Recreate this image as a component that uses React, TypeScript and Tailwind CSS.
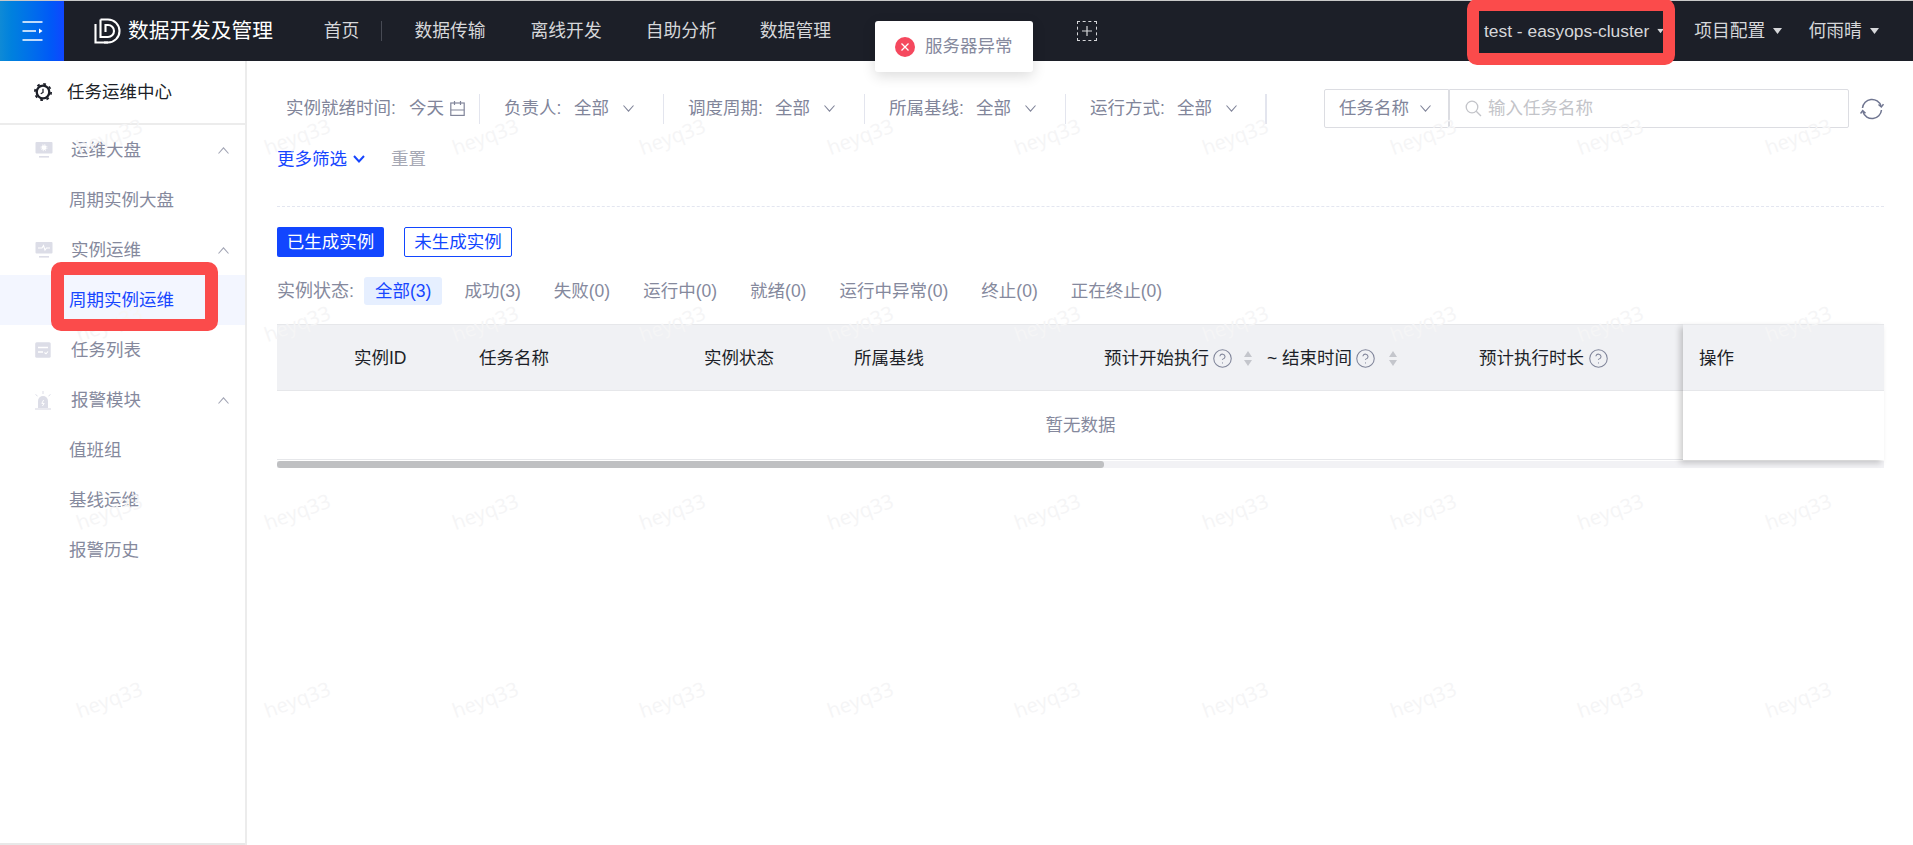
import React from "react";
import { CircleHelp } from "lucide-react";

function Chev({ className = "", up = false, w = 11 }: { className?: string; up?: boolean; w?: number }) {
  return (
    <svg width={w} height="7" viewBox="0 0 11 7" fill="none" className={className}>
      <polyline points={up ? "0.5,6.5 5.5,0.8 10.5,6.5" : "0.5,0.5 5.5,6.2 10.5,0.5"} stroke="currentColor" strokeWidth="1.1" />
    </svg>
  );
}

function Caret({ className = "" }: { className?: string }) {
  return (
    <svg width="9" height="6" viewBox="0 0 9 6" className={className}>
      <polygon points="0,0 9,0 4.5,6" fill="currentColor" />
    </svg>
  );
}

function Sort() {
  return (
    <svg width="8" height="15" viewBox="0 0 8 15" className="shrink-0">
      <polygon points="4,0 8,6 0,6" fill="#c4c6cc" />
      <polygon points="0,9 8,9 4,15" fill="#c4c6cc" />
    </svg>
  );
}

function Help() {
  return <CircleHelp size={21} strokeWidth={1.2} className="shrink-0 text-[#7f8499]" />;
}

function Filter({ w, label, value, labelW, heavy }: { w: string; label: string; value: string; labelW: string; heavy?: boolean }) {
  return (
    <div className={`${w} flex h-[30px] shrink-0 items-center ${heavy ? "border-r-2" : "border-r"} border-[#e3e5ee] pl-[24px] text-[#81859a]`}>
      <span className={`${labelW} shrink-0 whitespace-nowrap`}>{label}</span>
      <span className="whitespace-nowrap">{value}</span>
      <Chev className="ml-[14px] text-[#81859a]" />
    </div>
  );
}

const Nav = ({ children, className = "" }: { children: React.ReactNode; className?: string }) => (
  <span className={`whitespace-nowrap ${className}`}>{children}</span>
);

function Row({ icon, children, up }: { icon?: React.ReactNode; children: React.ReactNode; up?: boolean }) {
  return (
    <div className="flex h-[50px] items-center pl-[35px] pr-[16px] text-[#85899d]">
      <span className="flex w-[36px] shrink-0 items-center">{icon}</span>
      <span className="flex-1 whitespace-nowrap">{children}</span>
      {up && <Chev up className="text-[#a2a5b5]" />}
    </div>
  );
}

function Sub({ children, active }: { children: React.ReactNode; active?: boolean }) {
  return (
    <div className={`flex h-[50px] items-center pl-[69px] whitespace-nowrap ${active ? "bg-[#f3f6ff] text-[#1746ff]" : "text-[#85899d]"}`}>
      {children}
    </div>
  );
}

const statuses = ["成功(3)", "失败(0)", "运行中(0)", "就绪(0)", "运行中异常(0)", "终止(0)", "正在终止(0)"];

export default function App() {
  return (
    <div className="relative h-[845px] w-[1913px] overflow-hidden bg-white font-['Liberation_Sans','Noto_Sans_CJK_SC',sans-serif] text-[17.5px]">
      {/* header */}
      <header className="relative z-10 flex h-[61px] items-center border-t border-[#c9c9c9] bg-[#1c1f28] text-[#d6d7da]">
        <div className="flex h-full w-[64px] shrink-0 items-center justify-center bg-gradient-to-r from-[#0f8ad6] to-[#1046ff]">
          <svg width="21" height="20" viewBox="0 0 21 20" fill="none" stroke="#fff" strokeWidth="1.7">
            <path d="M0.5 1H20.5M0.5 10H14M0.5 19H20.5" />
            <polygon points="17,7.5 20.5,10 17,12.5" fill="#fff" stroke="none" />
          </svg>
        </div>
        <svg width="28" height="26" viewBox="0 0 28 26" fill="none" stroke="#fff" strokeWidth="2.1" className="ml-[30px] shrink-0">
          <path d="M6.5 1.5H14A11.5 11.5 0 0 1 14 24.5H10" />
          <path d="M1.5 6V24.5H14" />
          <path d="M6.5 1.5V19H14A6 6 0 0 0 14 7H11.5V14" />
        </svg>
        <span className="ml-[6px] whitespace-nowrap text-[20.7px] text-white">数据开发及管理</span>
        <Nav className="ml-[51px] text-[17.8px]">首页</Nav>
        <span className="ml-[22px] h-[20px] w-px bg-[#474a54]" />
        <Nav className="ml-[32px] text-[17.8px]">数据传输</Nav>
        <Nav className="ml-[45px] text-[17.8px]">离线开发</Nav>
        <Nav className="ml-[44px] text-[17.8px]">自助分析</Nav>
        <Nav className="ml-[43px] text-[17.8px]">数据管理</Nav>
        <div className="ml-[246px] flex h-[20px] w-[20px] shrink-0 items-center justify-center border border-dashed border-[#d6d7da]">
          <svg width="10" height="10" viewBox="0 0 10 10" stroke="#d6d7da" strokeWidth="1.2">
            <path d="M0 5H10M5 0V10" />
          </svg>
        </div>
        <Nav className="ml-[387px] text-[17.4px]">test - easyops-cluster</Nav>
        <Caret className="ml-[7px] scale-75" />
        <Nav className="ml-[29px] text-[17.8px]">项目配置</Nav>
        <Caret className="ml-[8px]" />
        <Nav className="ml-[26px] text-[17.8px]">何雨晴</Nav>
        <Caret className="ml-[8px]" />
      </header>

      <div className="flex h-[784px]">
        {/* sidebar */}
        <aside className="h-full w-[247px] shrink-0 border-r-2 border-[#ececec]">
          <div className="flex h-full flex-col border-b-2 border-[#e8e8e8]">
            <div className="flex h-[64px] shrink-0 items-center border-b-2 border-[#ececec] pl-[34px] text-[#1c1f28]">
              <svg width="18" height="18" viewBox="0 0 20 20" fill="none" className="mr-[15px] shrink-0">
                <circle cx="10" cy="10" r="7" stroke="#1c1f28" strokeWidth="2.6" />
                <circle cx="10" cy="10" r="9" stroke="#1c1f28" strokeWidth="2" strokeDasharray="3 4.07" />
                <path d="M10 6.5V10.5L7.5 12" stroke="#1c1f28" strokeWidth="1.4" />
              </svg>
              <span className="whitespace-nowrap">任务运维中心</span>
            </div>
            <Row
              up
              icon={
                <svg width="18" height="16" viewBox="0 0 18 16">
                  <rect x="0.5" y="0" width="17" height="11.5" rx="1" fill="#dcdde7" />
                  <rect x="4" y="14" width="10" height="1.6" fill="#dcdde7" />
                  <circle cx="9" cy="5.7" r="2.4" fill="#fff" />
                  <circle cx="9" cy="5.7" r="3" fill="none" stroke="#fff" strokeWidth="1" strokeDasharray="1.2 1.15" />
                </svg>
              }
            >
              运维大盘
            </Row>
            <Sub>周期实例大盘</Sub>
            <Row
              up
              icon={
                <svg width="18" height="16" viewBox="0 0 18 16" fill="none">
                  <rect x="0.5" y="0" width="17" height="11.5" rx="1" fill="#dcdde7" />
                  <rect x="4" y="14" width="10" height="1.6" fill="#dcdde7" />
                  <path d="M3 6H7L8.5 3.5L10 8L11.5 6H15" stroke="#fff" strokeWidth="1.1" />
                </svg>
              }
            >
              实例运维
            </Row>
            <Sub active>周期实例运维</Sub>
            <Row
              icon={
                <svg width="16" height="16" viewBox="0 0 16 16" fill="none">
                  <rect width="15.5" height="15.5" x="0.2" y="0.2" rx="1.5" fill="#dcdde7" />
                  <path d="M3 5.5H13M3 10H8" stroke="#fff" strokeWidth="1.3" />
                  <path d="M9.5 10.5L11 11.8L13 9.5" stroke="#fff" strokeWidth="1.1" />
                </svg>
              }
            >
              任务列表
            </Row>
            <Row
              up
              icon={
                <svg width="18" height="19" viewBox="0 0 18 19" fill="none" className="-ml-[1px]">
                  <path d="M4 17V10A5 5 0 0 1 14 10V17Z" fill="#dcdde7" />
                  <path d="M1 18H17" stroke="#dcdde7" strokeWidth="1.2" />
                  <path d="M9.6 9L7.8 12.4H10.2L8.4 15" stroke="#fff" strokeWidth="1" />
                  <path d="M9 0V3M1.5 3.5L3.5 5M16.5 3.5L14.5 5" stroke="#dcdde7" strokeWidth="1" />
                </svg>
              }
            >
              报警模块
            </Row>
            <Sub>值班组</Sub>
            <Sub>基线运维</Sub>
            <Sub>报警历史</Sub>
          </div>
        </aside>

        {/* main */}
        <main className="flex min-w-0 flex-1 flex-col pl-[30px] pr-[29px]">
          {/* filter row */}
          <div className="mt-[28px] flex h-[39px] items-center">
            <div className="flex h-[30px] w-[203px] shrink-0 items-center border-r border-[#e3e5ee] pl-[9px] text-[#81859a]">
              <span className="w-[123px] shrink-0 whitespace-nowrap">实例就绪时间:</span>
              <span className="whitespace-nowrap">今天</span>
              <svg width="15" height="15" viewBox="0 0 15 15" fill="none" stroke="#81859a" strokeWidth="1.2" className="ml-[6px]">
                <rect x="0.8" y="2" width="13.4" height="12.4" />
                <path d="M0.8 9H14.2M4.5 0V4M10.5 0V4" />
              </svg>
            </div>
            <Filter w="w-[184px]" labelW="w-[70px]" label="负责人:" value="全部" />
            <Filter w="w-[201px]" labelW="w-[87px]" label="调度周期:" value="全部" />
            <Filter w="w-[201px]" labelW="w-[87px]" label="所属基线:" value="全部" />
            <Filter w="w-[201px]" labelW="w-[87px]" label="运行方式:" value="全部" heavy />
            <div className="ml-[57px] flex h-[39px] w-[125px] shrink-0 items-center rounded-l-[2px] border border-[#dcdde2] pl-[14px] text-[#81859a]">
              <span className="whitespace-nowrap">任务名称</span>
              <Chev className="ml-[10px] text-[#81859a]" w={13} />
            </div>
            <div className="flex h-[39px] w-[400px] shrink-0 items-center rounded-r-[2px] border border-[#dcdde2] pl-[15px] text-[#c3c4c9]">
              <svg width="17" height="17" viewBox="0 0 17 17" fill="none" stroke="#c3c4c9" strokeWidth="1.3" className="mr-[6px] shrink-0">
                <circle cx="7" cy="7" r="5.8" />
                <path d="M11.2 11.2L16 16" />
              </svg>
              <span className="whitespace-nowrap">输入任务名称</span>
            </div>
            <svg width="24" height="24" viewBox="0 0 24 24" fill="none" stroke="#6f7590" strokeWidth="1.5" className="ml-[11px] shrink-0">
              <path d="M2.5 11A9.5 9.5 0 0 1 21 9" />
              <path d="M21.5 13A9.5 9.5 0 0 1 3 15" />
              <path d="M18.5 7.5L21.3 10L23.5 7.2" />
              <path d="M0.5 16.5L2.7 13.6L5.5 16.2" />
            </svg>
          </div>

          {/* more filters */}
          <div className="mt-[19px] flex h-[24px] items-center">
            <span className="whitespace-nowrap text-[#1746ff]">更多筛选</span>
            <svg width="12" height="8" viewBox="0 0 12 8" fill="none" stroke="#1746ff" strokeWidth="2" className="ml-[6px]">
              <polyline points="1,1 6,6.5 11,1" />
            </svg>
            <span className="ml-[26px] whitespace-nowrap text-[#a6a8b4]">重置</span>
          </div>

          <div className="mt-[35px] border-t border-dashed border-[#e3e6f0]" />

          {/* tabs */}
          <div className="mt-[20px] flex h-[30px] gap-[20px]">
            <div className="flex w-[107px] items-center justify-center rounded-[2px] bg-[#1246ff] text-white">已生成实例</div>
            <div className="flex w-[108px] items-center justify-center rounded-[2px] border border-[#1246ff] text-[#1246ff]">未生成实例</div>
          </div>

          {/* status */}
          <div className="mt-[20px] flex h-[28px] items-center gap-[11px] text-[#85899d]">
            <span className="w-[76px] whitespace-nowrap text-[18px]">实例状态:</span>
            <span className="flex h-[28px] items-center rounded-[3px] bg-[#e6efff] px-[11px] whitespace-nowrap text-[#1746ff]">全部(3)</span>
            {statuses.map((s) => (
              <span key={s} className="px-[11px] whitespace-nowrap">
                {s}
              </span>
            ))}
          </div>

          {/* table */}
          <div className="relative mt-[19px]">
            <div className="flex h-[67px] items-center border-y border-[#e6e7ea] bg-[#f0f1f4] pt-[2px] text-[#1c1f28]">
              <span className="w-[202px] shrink-0 whitespace-nowrap pl-[77px]">实例ID</span>
              <span className="w-[225px] shrink-0 whitespace-nowrap">任务名称</span>
              <span className="w-[150px] shrink-0 whitespace-nowrap">实例状态</span>
              <span className="w-[250px] shrink-0 whitespace-nowrap">所属基线</span>
              <span className="flex w-[163px] shrink-0 items-center">
                <span className="whitespace-nowrap">预计开始执行</span>
                <span className="ml-[3px]"><Help /></span>
                <span className="ml-[11px]"><Sort /></span>
              </span>
              <span className="flex w-[212px] shrink-0 items-center">
                <span className="whitespace-nowrap">~ 结束时间</span>
                <span className="ml-[3px]"><Help /></span>
                <span className="ml-[13px]"><Sort /></span>
              </span>
              <span className="flex items-center">
                <span className="whitespace-nowrap">预计执行时长</span>
                <span className="ml-[4px]"><Help /></span>
              </span>
            </div>
            <div className="flex h-[69px] items-center justify-center border-b border-[#e6e7ea] pt-[1px] text-[#85899d]">暂无数据</div>
            <div className="mt-px h-[7px] bg-[#f2f2f5]">
              <div className="h-full w-[827px] rounded-[3px] bg-[#bfc0c2]" />
            </div>
            {/* fixed column */}
            <div className="absolute top-0 right-0 h-[136px] w-[201px] shadow-[-3px_3px_6px_rgba(0,0,0,0.2)]">
              <div className="flex h-[67px] items-center border-y border-[#e6e7ea] bg-[#f0f1f4] pt-[2px] pl-[16px] text-[#1c1f28]">操作</div>
              <div className="h-[69px] bg-white" />
            </div>
          </div>
        </main>
      </div>

      {/* watermark */}
      <div className="pointer-events-none absolute top-[43px] left-[16px] grid grid-cols-[repeat(10,187.6px)] auto-rows-[187.6px] place-items-center">
        {Array.from({ length: 40 }).map((_, i) => (
          <span key={i} className="-rotate-[20deg] font-['Open_Sans',sans-serif] text-[20px] text-[#f5f5f6]">
            heyq33
          </span>
        ))}
      </div>

      {/* toast */}
      <div className="absolute top-[21px] left-[875px] z-20 flex h-[51px] w-[158px] items-center rounded-[3px] bg-white pl-[20px] shadow-[0_4px_14px_rgba(0,0,0,0.14)]">
        <span className="flex h-[20px] w-[20px] shrink-0 items-center justify-center rounded-full bg-[#f5485e]">
          <svg width="8" height="8" viewBox="0 0 8 8" stroke="#fff" strokeWidth="1.3">
            <path d="M0.5 0.5L7.5 7.5M7.5 0.5L0.5 7.5" />
          </svg>
        </span>
        <span className="ml-[10px] whitespace-nowrap text-[#85899d]">服务器异常</span>
      </div>

      {/* red annotations */}
      <div className="pointer-events-none absolute -top-[1px] left-[1467px] z-30 h-[66px] w-[208px] rounded-[10px] border-x-[12px] border-y-[12px] border-[#fb4b4b]" />
      <div className="pointer-events-none absolute top-[262px] left-[51px] z-30 h-[69px] w-[167px] rounded-[10px] border-x-[13px] border-t-[13px] border-b-[12px] border-[#fb4b4b]" />
    </div>
  );
}
